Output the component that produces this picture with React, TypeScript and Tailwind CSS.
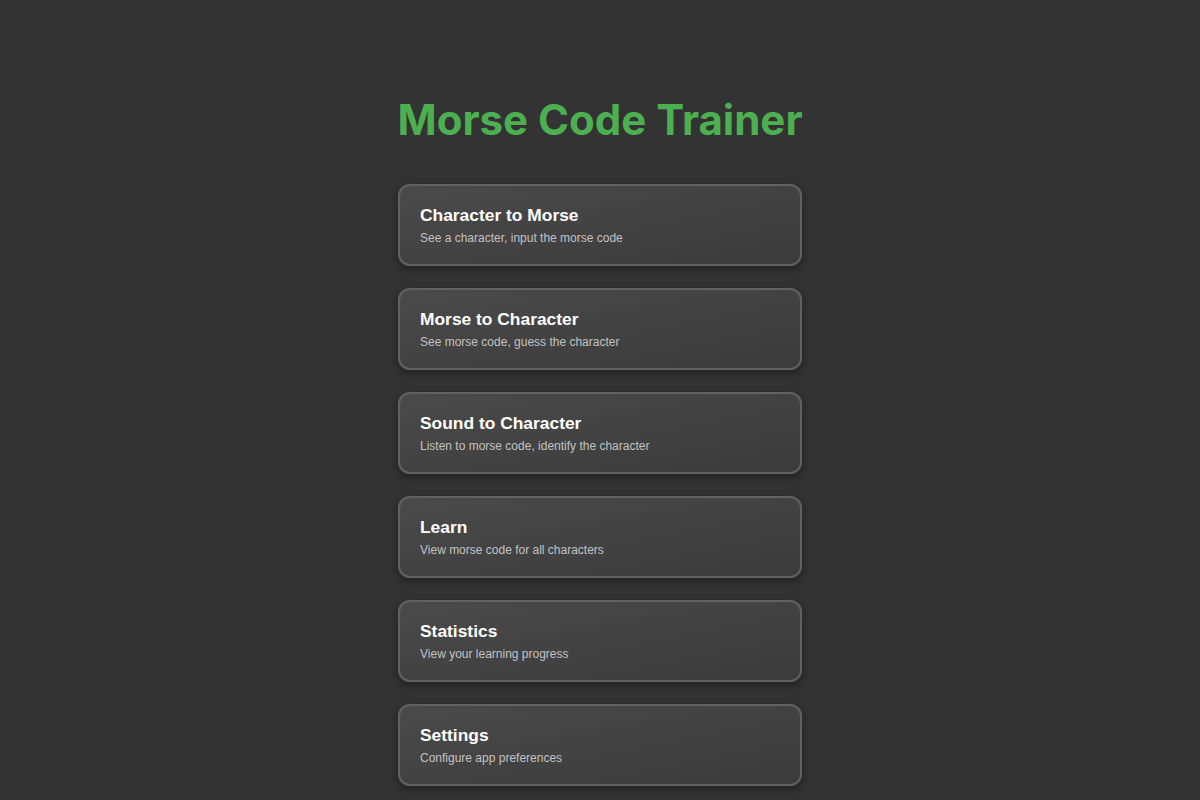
const modes = [
  { title: 'Character to Morse', desc: 'See a character, input the morse code' },
  { title: 'Morse to Character', desc: 'See morse code, guess the character' },
  { title: 'Sound to Character', desc: 'Listen to morse code, identify the character' },
  { title: 'Learn', desc: 'View morse code for all characters' },
  { title: 'Statistics', desc: 'View your learning progress' },
  { title: 'Settings', desc: 'Configure app preferences' },
]

export default function App() {
  return (
    <div className="min-h-screen bg-[#333333] flex flex-col items-center pt-[95px] pb-[12px]">
      <h1
        className="text-[42px] leading-[50px] font-bold text-[#4caf50]"
        style={{ fontFamily: 'Inter, "Liberation Sans", sans-serif' }}
      >
        Morse Code Trainer
      </h1>

      {/* Mode list */}
      <div className="mt-[39px] flex flex-col gap-[22px] w-[404px]">
        {modes.map((mode) => (
          <button
            key={mode.title}
            className="text-left rounded-[12px] border-2 border-[#626262] bg-gradient-to-br from-[#4a4a4a] to-[#3b3b3b]
              px-[20px] pt-[19px] pb-[19px] shadow-[0_4px_8px_rgba(0,0,0,0.35)] cursor-pointer"
            style={{ fontFamily: '"Liberation Sans", Arial, sans-serif' }}
          >
            <div className="text-[17.4px] leading-[21px] font-bold text-white mb-[5px]">{mode.title}</div>
            <div className="text-[12px] leading-[14px] text-[#c2c2c2]">{mode.desc}</div>
          </button>
        ))}
      </div>
    </div>
  )
}
